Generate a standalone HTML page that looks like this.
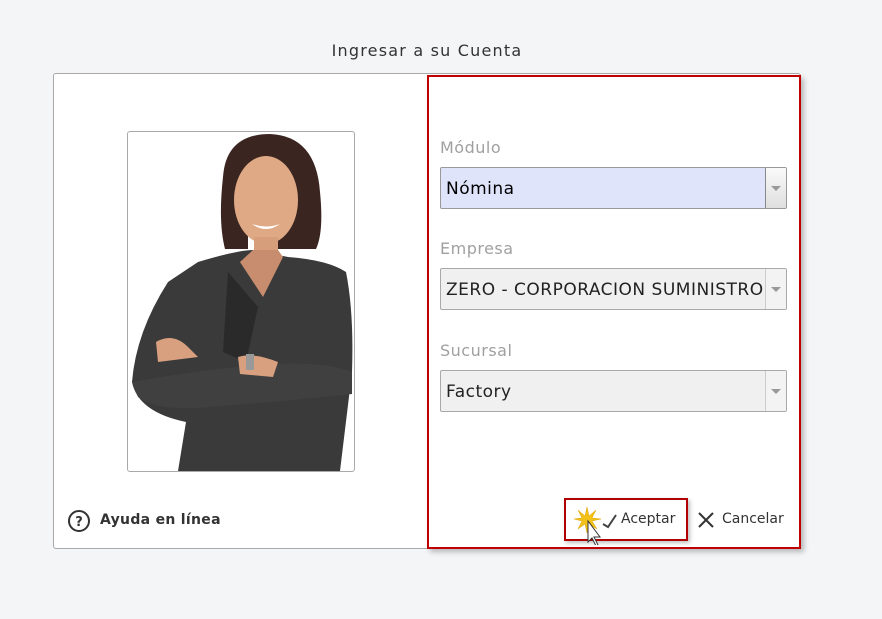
<!DOCTYPE html>
<html><head><meta charset="utf-8"><style>
body{margin:0;width:882px;height:619px;background:#f4f5f7;font-family:"DejaVu Sans",Verdana,sans-serif;position:relative;overflow:hidden}
.t{position:absolute;top:41px;left:0;width:854px;text-align:center;font-size:16px;color:#333;letter-spacing:1.2px}
.box{position:absolute;left:53px;top:73px;width:746px;height:474px;background:#fff;border:1px solid #a9a9a9;border-radius:3px}
.red{position:absolute;left:427px;top:75px;width:370px;height:470px;border:2px solid #c00000;box-shadow:3px 3px 5px rgba(0,0,0,.25)}
.photo{position:absolute;left:127px;top:131px;width:226px;height:339px;border:1px solid #a9a9a9;border-radius:3px;overflow:hidden;background:#fff}
.lbl{position:absolute;left:440px;font-size:16px;color:#a0a0a0;letter-spacing:.5px}
.sel{position:absolute;left:440px;width:347px;height:42px;border:1px solid #a9a9a9;border-radius:2px;background:#f0f0f0;font-size:17px;letter-spacing:.5px;line-height:42px;color:#222;box-sizing:border-box;padding-left:5px;overflow:hidden;white-space:nowrap}
.sel .b{position:absolute;right:0;top:0;width:20px;height:40px;border-left:1px solid #ccc;background:#f3f3f3}
.sel .b:after{content:"";position:absolute;left:5px;top:18px;border:5px solid transparent;border-top:5px solid #999}
</style></head><body>
<div class="t">Ingresar a su Cuenta</div>
<div class="box"></div>
<div class="red"></div>
<div class="photo"><svg width="226" height="339">
<path d="M95 45 Q98 2 142 2 Q188 4 192 60 Q196 100 188 117 L150 117 L150 90 L120 90 L120 117 L97 117 Q90 90 95 45Z" fill="#3b2520"/>
<ellipse cx="138" cy="68" rx="32" ry="44" fill="#e0a985"/>
<path d="M124 92 Q138 102 152 92 Q138 97 124 92Z" fill="#fff"/>
<rect x="126" y="105" width="24" height="25" fill="#d79e7c"/>
<path d="M70 130 Q110 118 125 118 L160 125 Q200 128 218 140 Q226 180 224 240 L212 339 L50 339 L58 290 Q10 280 4 250 Q8 200 40 150 Z" fill="#3a3a3a"/>
<path d="M112 130 L135 165 L155 125 L150 118 L125 118Z" fill="#c78d6e"/>
<path d="M100 140 L130 175 L118 230 L95 220Z" fill="#2a2a2a"/>
<path d="M4 250 Q60 240 110 235 L150 232 Q200 230 224 240 L224 262 Q150 270 80 275 Q30 280 10 265Z" fill="#404040"/>
<path d="M28 210 Q45 200 60 215 L70 225 L30 230Z" fill="#d9a080"/>
<path d="M110 225 Q125 220 150 230 L145 245 L112 242Z" fill="#d9a080"/>
<rect x="118" y="222" width="8" height="16" fill="#999"/>
</svg></div>
<div class="lbl" style="top:138px">Módulo</div>
<div class="sel" style="top:167px;background:#dfe4fb;color:#000;border-color:#999">Nómina<div class="b" style="background:linear-gradient(#fafafa,#ddd);border:1px solid #888;top:-1px;right:-1px;height:42px"></div></div>
<div class="lbl" style="top:239px">Empresa</div>
<div class="sel" style="top:268px">ZERO - CORPORACION SUMINISTRO<div class="b"></div></div>
<div class="lbl" style="top:341px">Sucursal</div>
<div class="sel" style="top:370px">Factory<div class="b"></div></div>
<svg style="position:absolute;left:67px;top:509px" width="24" height="24"><circle cx="12" cy="12" r="10" fill="none" stroke="#333" stroke-width="2"/><text x="12" y="17" text-anchor="middle" font-family="DejaVu Sans" font-weight="bold" font-size="13" fill="#333">?</text></svg>
<div style="position:absolute;left:100px;top:512px;font-size:14px;font-weight:bold;color:#333;letter-spacing:.3px">Ayuda en línea</div>
<div style="position:absolute;left:564px;top:498px;width:120px;height:39px;border:2px solid #b00000;box-shadow:2px 2px 4px rgba(0,0,0,.25)"></div>
<svg style="position:absolute;left:574px;top:505px" width="45" height="40"><path d="M13 2 L15 11 L22 5 L18 13 L27 14 L18 16 L23 24 L15 19 L13 28 L11 19 L4 24 L8 16 L0 14 L8 13 L4 5 L11 11Z" fill="#f2c21a" stroke="#e0a000" stroke-width=".5"/><path d="M29 19 L34 22 L42 10" fill="none" stroke="#444" stroke-width="2"/><path d="M14 16 L14 37 L18 33 L22 41 L24 40 L20 32 L26 32Z" fill="#fff" stroke="#333"/></svg>
<div style="position:absolute;left:621px;top:511px;font-size:14px;color:#333">Aceptar</div>
<svg style="position:absolute;left:697px;top:511px" width="18" height="18"><path d="M2 2 L16 16 M16 2 L2 16" stroke="#333" stroke-width="2"/></svg>
<div style="position:absolute;left:722px;top:511px;font-size:14px;color:#333">Cancelar</div>
</body></html>
